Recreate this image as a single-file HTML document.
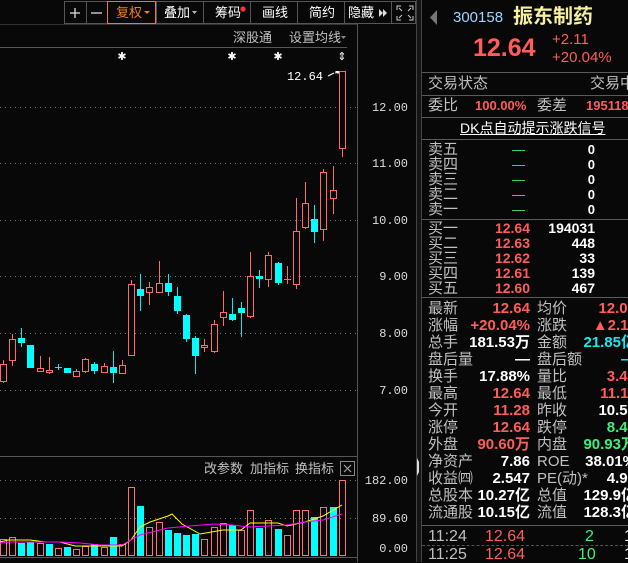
<!DOCTYPE html>
<html><head><meta charset="utf-8"><style>
*{margin:0;padding:0;box-sizing:border-box}
body{width:628px;height:562px;background:#080808;overflow:hidden;position:relative;font-family:"Liberation Sans","Noto Sans CJK SC",sans-serif;color:#c8c8c8}
.t{position:absolute;font-size:13px;line-height:15px;white-space:nowrap}
.r{text-align:right}
.b{font-size:15px;font-weight:bold}
.red{color:#ff5c5c}.grn{color:#3cf07a}.wht{color:#fff}.cy{color:#18e8f0}.gr{color:#c0c0c0}
.hl{position:absolute;left:422px;width:206px;height:1px;background:#5a5a5a}
</style></head><body>
<svg width="628" height="562" style="position:absolute;left:0;top:0">
<g stroke="#555" fill="none">
<rect x="64.5" y="1.5" width="351" height="22"/>
<line x1="86.5" y1="1" x2="86.5" y2="23"/><line x1="107.5" y1="1" x2="107.5" y2="23"/>
<line x1="156.5" y1="1" x2="156.5" y2="23"/><line x1="203.5" y1="1" x2="203.5" y2="23"/>
<line x1="250.5" y1="1" x2="250.5" y2="23"/><line x1="297.5" y1="1" x2="297.5" y2="23"/>
<line x1="344.5" y1="1" x2="344.5" y2="23"/><line x1="391.5" y1="1" x2="391.5" y2="23"/>
</g>
<rect x="107.5" y="1.5" width="48" height="22" fill="none" stroke="#e8801a"/>
<g stroke="#ddd" stroke-width="1.3"><line x1="70" y1="13" x2="80" y2="13"/><line x1="75" y1="8" x2="75" y2="18"/><line x1="91" y1="13" x2="102" y2="13"/></g>
<polygon points="144,11 150,11 147,14" fill="#e8801a"/>
<polygon points="192,11 197,11 194.5,14" fill="#bbb"/>
<circle cx="243" cy="9" r="2.6" fill="#ff3030"/>
<polygon points="379,9 379,17 383,13" fill="#ddd"/><polygon points="383,9 383,17 387,13" fill="#ddd"/>
<g stroke="#ccc" fill="none"><path d="M397 10V6h4M409 6h4v4M397 16v4h4M409 20h4v-4M399 8l3 3M411 8l-3 3M399 18l3-3M411 18l-3-3"/></g>
<line x1="0" y1="24.5" x2="357" y2="24.5" stroke="#333"/>
<line x1="0" y1="47.5" x2="347" y2="47.5" stroke="#555"/>
<polygon points="341,36 346,36 343.5,39" fill="#888"/>
<line x1="357.5" y1="24" x2="357.5" y2="562" stroke="#555"/>
<rect x="416" y="0" width="5" height="562" fill="#151515"/>
<line x1="416.5" y1="0" x2="416.5" y2="562" stroke="#444"/>
<line x1="421.5" y1="0" x2="421.5" y2="562" stroke="#444"/>
<polygon points="417,458 419,462 419,472 417,476" fill="#ddd"/>
<g stroke="#777" stroke-dasharray="1 4">
<line x1="0" y1="107.5" x2="357" y2="107.5"/><line x1="0" y1="163.5" x2="357" y2="163.5"/>
<line x1="0" y1="220.5" x2="357" y2="220.5"/><line x1="0" y1="276.5" x2="357" y2="276.5"/>
<line x1="0" y1="333.5" x2="357" y2="333.5"/><line x1="0" y1="390.5" x2="357" y2="390.5"/>
<line x1="0" y1="480.5" x2="357" y2="480.5"/><line x1="0" y1="518.5" x2="357" y2="518.5"/>
</g>
<line x1="0" y1="456.5" x2="357" y2="456.5" stroke="#555"/>
<line x1="0" y1="557.5" x2="357" y2="557.5" stroke="#555"/>
<g fill="#ddd" font-family="Liberation Mono,monospace" font-size="12">
<text x="408" y="111" text-anchor="end">12.00</text><text x="408" y="167" text-anchor="end">11.00</text>
<text x="408" y="224" text-anchor="end">10.00</text><text x="408" y="280" text-anchor="end">9.00</text>
<text x="408" y="337" text-anchor="end">8.00</text><text x="408" y="394" text-anchor="end">7.00</text>
<text x="408" y="484" text-anchor="end">182.00</text><text x="408" y="522" text-anchor="end">89.60</text>
<text x="408" y="552" text-anchor="end">0.00</text>
<text x="323" y="80" fill="#fff" text-anchor="end">12.64</text>
</g>
<path d="M328 76 L334 73 M335 73 L339 72" stroke="#fff" fill="none"/>
<polygon points="335,71 341,71 338,74" fill="#fff"/>
<g fill="#fff" font-size="11" font-family="DejaVu Sans,sans-serif" text-anchor="middle"><text x="122" y="60">✱</text><text x="232" y="60">✱</text><text x="278" y="60">✱</text><text x="342" y="60">⇕</text></g>
<g stroke="#ff6b6b" stroke-width="1" fill="#080808">
<line x1="3.5" y1="360" x2="3.5" y2="383"/><rect x="0.5" y="364.5" width="6" height="17"/>
<line x1="12.5" y1="334" x2="12.5" y2="366"/><rect x="9.5" y="339.5" width="6" height="21"/>
<line x1="40.5" y1="356" x2="40.5" y2="372"/><rect x="37.5" y="368.5" width="6" height="3"/>
<line x1="49.5" y1="357" x2="49.5" y2="374"/><rect x="46.5" y="370.5" width="6" height="2"/>
<line x1="76.5" y1="369" x2="76.5" y2="377"/><rect x="73.5" y="371.5" width="6" height="5"/>
<line x1="85.5" y1="358" x2="85.5" y2="373"/><rect x="82.5" y="359.5" width="6" height="12"/>
<line x1="104.5" y1="363" x2="104.5" y2="372"/><rect x="101.5" y="366.5" width="6" height="6"/>
<line x1="122.5" y1="360" x2="122.5" y2="373"/><rect x="119.5" y="365.5" width="6" height="8"/>
<line x1="131.5" y1="280" x2="131.5" y2="356"/><rect x="128.5" y="284.5" width="6" height="71"/>
<line x1="149.5" y1="282" x2="149.5" y2="305"/><rect x="146.5" y="287.5" width="6" height="5"/>
<line x1="159.5" y1="261" x2="159.5" y2="292"/><rect x="156.5" y="283.5" width="6" height="9"/>
<line x1="204.5" y1="339" x2="204.5" y2="352"/><rect x="201.5" y="345.5" width="6" height="2"/>
<line x1="214.5" y1="320" x2="214.5" y2="353"/><rect x="211.5" y="324.5" width="6" height="27"/>
<line x1="223.5" y1="291" x2="223.5" y2="326"/><rect x="220.5" y="312.5" width="6" height="5"/>
<line x1="250.5" y1="252" x2="250.5" y2="318"/><rect x="247.5" y="276.5" width="6" height="40"/>
<line x1="268.5" y1="252" x2="268.5" y2="287"/><rect x="265.5" y="255.5" width="6" height="24"/>
<line x1="287.5" y1="266" x2="287.5" y2="284"/><line x1="284" y1="279.5" x2="291" y2="279.5"/>
<line x1="296.5" y1="198" x2="296.5" y2="289"/><rect x="293.5" y="231.5" width="6" height="53"/>
<line x1="305.5" y1="182" x2="305.5" y2="229"/><rect x="302.5" y="203.5" width="6" height="24"/>
<line x1="323.5" y1="169" x2="323.5" y2="241"/><rect x="320.5" y="172.5" width="6" height="57"/>
<line x1="333.5" y1="166" x2="333.5" y2="214"/><rect x="330.5" y="190.5" width="6" height="8"/>
<line x1="342.5" y1="71" x2="342.5" y2="157"/><rect x="339.5" y="71.5" width="6" height="77"/>
</g>
<g stroke="#00f0f0" fill="#00ffff">
<line x1="21.5" y1="328" x2="21.5" y2="347"/><rect x="18" y="338" width="7" height="5" stroke="none"/>
<rect x="27" y="345" width="7" height="23" stroke="none"/>
<line x1="58.5" y1="364" x2="58.5" y2="370"/><line x1="55" y1="367.5" x2="62" y2="367.5"/>
<rect x="64" y="368" width="7" height="5" stroke="none"/>
<line x1="94.5" y1="362" x2="94.5" y2="374"/><rect x="91" y="364" width="7" height="7" stroke="none"/>
<line x1="113.5" y1="351" x2="113.5" y2="383"/><rect x="110" y="367" width="7" height="6" stroke="none"/>
<line x1="140.5" y1="274" x2="140.5" y2="311"/><rect x="137" y="289" width="7" height="7" stroke="none"/>
<line x1="168.5" y1="274" x2="168.5" y2="296"/><rect x="165" y="283" width="7" height="9" stroke="none"/>
<line x1="177.5" y1="287" x2="177.5" y2="314"/><rect x="174" y="296" width="7" height="15" stroke="none"/>
<line x1="186.5" y1="314" x2="186.5" y2="342"/><rect x="183" y="315" width="7" height="24" stroke="none"/>
<line x1="195.5" y1="336" x2="195.5" y2="374"/><rect x="192" y="338" width="7" height="18" stroke="none"/>
<line x1="232.5" y1="298" x2="232.5" y2="321"/><rect x="229" y="314" width="7" height="6" stroke="none"/>
<line x1="241.5" y1="302" x2="241.5" y2="337"/><rect x="238" y="308" width="7" height="5" stroke="none"/>
<line x1="259.5" y1="270" x2="259.5" y2="288"/><rect x="256" y="276" width="7" height="3" stroke="none"/>
<line x1="278.5" y1="262" x2="278.5" y2="285"/><rect x="275" y="263" width="7" height="20" stroke="none"/>
<line x1="314.5" y1="205" x2="314.5" y2="243"/><rect x="311" y="219" width="7" height="13" stroke="none"/>
</g>
<g fill="#00ffff">
<rect x="18" y="543" width="7" height="13"/><rect x="27" y="542" width="7" height="14"/>
<rect x="46" y="544" width="7" height="12"/><rect x="64" y="547" width="7" height="9"/>
<rect x="91" y="544" width="7" height="12"/><rect x="110" y="537" width="7" height="19"/>
<rect x="137" y="506" width="7" height="50"/><rect x="165" y="530" width="7" height="26"/>
<rect x="174" y="533" width="7" height="23"/><rect x="183" y="535" width="7" height="21"/>
<rect x="192" y="534" width="7" height="22"/><rect x="229" y="525" width="7" height="31"/>
<rect x="256" y="528" width="7" height="28"/><rect x="275" y="529" width="7" height="27"/>
<rect x="311" y="517" width="7" height="39"/><rect x="330" y="507" width="7" height="49"/>
</g>
<g stroke="#ff7070" fill="none">
<rect x="0.5" y="539.5" width="6" height="16"/><rect x="9.5" y="537.5" width="6" height="18"/>
<rect x="37.5" y="543.5" width="6" height="12"/><rect x="55.5" y="548.5" width="6" height="7"/>
<rect x="73.5" y="549.5" width="6" height="6"/><rect x="82.5" y="546.5" width="6" height="9"/>
<rect x="101.5" y="547.5" width="6" height="8"/><rect x="119.5" y="544.5" width="6" height="11"/>
<rect x="128.5" y="487.5" width="6" height="68"/><rect x="146.5" y="527.5" width="6" height="28"/>
<rect x="156.5" y="522.5" width="6" height="33"/><rect x="201.5" y="539.5" width="6" height="16"/>
<rect x="211.5" y="527.5" width="6" height="28"/><rect x="220.5" y="523.5" width="6" height="32"/>
<rect x="238.5" y="530.5" width="6" height="25"/><rect x="247.5" y="510.5" width="6" height="45"/>
<rect x="265.5" y="520.5" width="6" height="35"/><rect x="284.5" y="535.5" width="6" height="20"/>
<rect x="293.5" y="510.5" width="6" height="45"/><rect x="302.5" y="510.5" width="6" height="45"/>
<rect x="320.5" y="507.5" width="6" height="48"/><rect x="339.5" y="480.5" width="6" height="75"/>
</g>
<polyline fill="none" stroke="#ffff00" points="0,542 8,540 30,540 45,542 60,542 75,546 108,546 122,546 131,540 140,527 150,522 168,516 172,514 182,524 200,534 223,530 241,530 250,523 278,523 287,526 305,522 323,516 342,505"/>
<polyline fill="none" stroke="#ff00ff" points="0,543 10,542 60,542 80,543 100,545 122,545 140,535 168,528 190,526 214,524 232,525 250,527 287,525 305,522 323,520 342,514"/>
<rect x="340.5" y="461.5" width="14" height="14" fill="none" stroke="#888"/>
<path d="M344 465l7 7M351 465l-7 7" stroke="#aaa"/>
<polygon points="437,10 437,25 430,17.5" fill="#777"/>
</svg>
<div class="t gr" style="left:233px;top:30px">深股通</div>
<div class="t gr" style="left:289px;top:30px">设置均线</div>
<div class="t" style="left:116px;top:5px;color:#e8801a">复权</div>
<div class="t wht" style="left:164px;top:5px">叠加</div>
<div class="t wht" style="left:215px;top:5px">筹码</div>
<div class="t wht" style="left:262px;top:5px">画线</div>
<div class="t wht" style="left:309px;top:5px">简约</div>
<div class="t wht" style="left:348px;top:5px">隐藏</div>
<div class="t gr" style="left:204px;top:461px">改参数</div>
<div class="t gr" style="left:250px;top:461px">加指标</div>
<div class="t gr" style="left:295px;top:461px">换指标</div>

<div class="t" style="left:453px;top:9px;color:#9fd4ff;font-size:15px;line-height:17px">300158</div>
<div class="t" style="left:513px;top:5px;color:#f4f0a0;font-size:20px;line-height:24px;font-weight:bold">振东制药</div>
<div class="t red" style="left:473px;top:34px;font-size:25px;line-height:28px;font-weight:bold">12.64</div>
<div class="t red" style="left:552px;top:32px;font-size:15px">+2.11</div>
<div class="t red" style="left:552px;top:50px;font-size:15px">+20.04%</div>
<div class="hl" style="top:72px"></div>
<div class="t gr" style="left:428px;top:75px;font-size:15px;line-height:17px">交易状态</div>
<div class="t gr" style="left:590px;top:75px;font-size:15px;line-height:17px">交易中</div>
<div class="hl" style="top:95px"></div>
<div class="t gr" style="left:428px;top:97px;font-size:15px;line-height:17px">委比</div>
<div class="t red" style="left:475px;top:98px;font-weight:bold">100.00%</div>
<div class="t gr" style="left:537px;top:97px;font-size:15px;line-height:17px">委差</div>
<div class="t red" style="left:586px;top:98px;font-weight:bold">195118</div>
<div class="hl" style="top:117px"></div>
<div class="t wht" style="left:460px;top:120px;text-decoration:underline;font-size:14px;line-height:16px">DK点自动提示涨跌信号</div>
<div class="hl" style="top:139px"></div>
<div class="t gr" style="left:428px;top:142px;line-height:15px;font-size:15px">卖五<br>卖四<br>卖三<br>卖二<br>卖一</div>
<div class="t grn" style="left:512px;top:142px;line-height:15px">—<br>—<br>—<br>—<br>—</div>
<div class="t wht r" style="left:560px;width:35px;top:142px;line-height:15px;font-weight:bold">0<br>0<br>0<br>0<br>0</div>
<div class="hl" style="top:219px"></div>
<div class="t gr" style="left:428px;top:221px;line-height:15px;font-size:15px">买一<br>买二<br>买三<br>买四<br>买五</div>
<div class="t red r" style="left:470px;width:60px;top:221px;line-height:15px;font-size:14px;font-weight:bold">12.64<br>12.63<br>12.62<br>12.61<br>12.60</div>
<div class="t wht r" style="left:530px;width:65px;top:221px;line-height:15px;font-size:14px;font-weight:bold">194031<br>448<br>33<br>139<br>467</div>
<div class="hl" style="top:297px"></div>
<div class="t gr" style="left:428px;top:300px;line-height:17px;font-size:15px">最新<br>涨幅<br>总手<br>盘后量<br>换手<br>最高<br>今开<br>涨停<br>外盘<br>净资产<br>收益㈣<br>总股本<br>流通股</div>
<div class="t r b" style="left:440px;width:90px;top:300px;line-height:17px"><span class="red">12.64</span><br><span class="red">+20.04%</span><br><span class="wht">181.53万</span><br><span class="wht">—</span><br><span class="wht">17.88%</span><br><span class="red">12.64</span><br><span class="red">11.28</span><br><span class="red">12.64</span><br><span class="red">90.60万</span><br><span class="wht">7.86</span><br><span class="wht">2.547</span><br><span class="wht">10.27亿</span><br><span class="wht">10.15亿</span></div>
<div class="t gr" style="left:537px;top:300px;line-height:17px;font-size:15px">均价<br>涨跌<br>金额<br>盘后额<br>量比<br>最低<br>昨收<br>跌停<br>内盘<br>ROE<br>PE(动)*<br>总值<br>流值</div>
<div class="t r b" style="left:560px;width:76px;top:300px;line-height:17px"><span class="red">12.03</span><br><span class="red">▲2.11</span><br><span class="cy">21.85亿</span><br><span class="cy">—</span><br><span class="red">3.40</span><br><span class="red">11.11</span><br><span class="wht">10.53</span><br><span class="grn">8.42</span><br><span class="grn">90.93万</span><br><span class="wht">38.01%</span><br><span class="wht">4.90</span><br><span class="wht">129.9亿</span><br><span class="wht">128.3亿</span></div>
<div class="hl" style="top:525px"></div>
<div class="t gr" style="left:428px;top:529px;font-size:16px">11:24</div>
<div class="t red" style="left:485px;top:529px;font-size:16px">12.64</div>
<div class="t grn" style="left:585px;top:529px;font-size:16px">2</div>
<div class="t wht" style="left:624px;top:529px;font-size:16px">1</div>
<div style="position:absolute;left:422px;top:545px;width:206px;border-top:1px dashed #555"></div>
<div class="t gr" style="left:428px;top:547px;font-size:16px">11:25</div>
<div class="t red" style="left:485px;top:547px;font-size:16px">12.64</div>
<div class="t grn" style="left:578px;top:547px;font-size:16px">10</div>
<div class="t wht" style="left:624px;top:547px;font-size:16px">1</div>
</body></html>
